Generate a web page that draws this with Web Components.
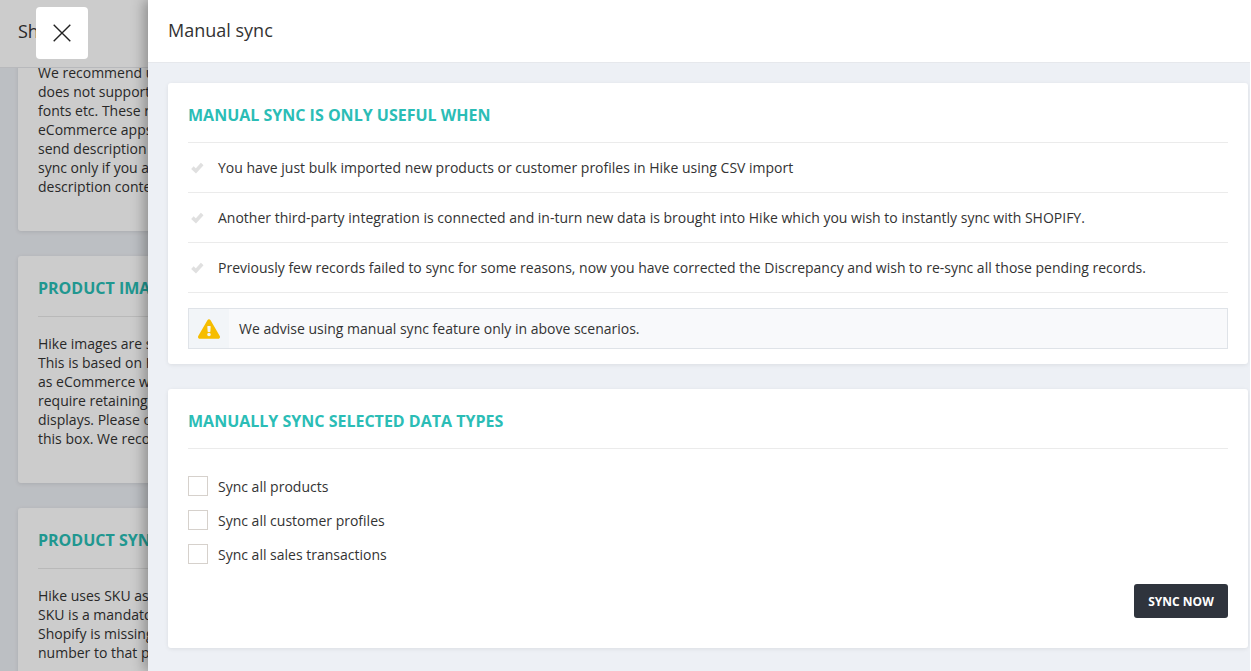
<!DOCTYPE html>
<html lang="en">
<head>
<meta charset="utf-8">
<title>Manual sync</title>
<style>
  html, body { margin: 0; height: 100%; overflow: hidden; }
  body { font-family: "Open Sans", "Liberation Sans", sans-serif; color: #333; }
</style>
</head>
<body>
<shop-page>
  <info-card slot="cards">
    <span>We recommend u</span><span>does not support</span><span>fonts etc. These r</span><span>eCommerce apps</span><span>send description</span><span>sync only if you a</span><span>description conte</span>
  </info-card>
  <info-card slot="cards" heading="Product images">
    <span>Hike images are s</span><span>This is based on H</span><span>as eCommerce w</span><span>require retaining</span><span>displays. Please c</span><span>this box. We reco</span>
  </info-card>
  <info-card slot="cards" heading="Product sync">
    <span>Hike uses SKU as</span><span>SKU is a mandato</span><span>Shopify is missing</span><span>number to that p</span>
  </info-card>
</shop-page>

<sync-drawer heading="Manual sync">
  <sync-card heading="Manual sync is only useful when">
    <check-row>You have just bulk imported new products or customer profiles in Hike using CSV import</check-row>
    <check-row>Another third-party integration is connected and in-turn new data is brought into Hike which you wish to instantly sync with SHOPIFY.</check-row>
    <check-row>Previously few records failed to sync for some reasons, now you have corrected the Discrepancy and wish to re-sync all those pending records.</check-row>
    <warn-note>We advise using manual sync feature only in above scenarios.</warn-note>
  </sync-card>
  <sync-card heading="Manually sync selected data types" spaced>
    <div style="height: 27px"></div>
    <sync-option>Sync all products</sync-option>
    <sync-option>Sync all customer profiles</sync-option>
    <sync-option>Sync all sales transactions</sync-option>
    <sync-button>Sync now</sync-button>
  </sync-card>
</sync-drawer>

<script>
// Pagina de fondo, oscurecida por el overlay
class ShopPage extends HTMLElement {
  constructor() {
    super();
    this.attachShadow({ mode: 'open' });
    this.shadowRoot.innerHTML = `
      <style>
        :host { display: flex; flex-direction: column; height: 671px; position: relative; overflow: hidden; background: #eceff4; }
        header { flex: none; height: 68px; box-sizing: border-box; padding-left: 18px; background: #fff; border-bottom: 1px solid #e6e8ec; font-size: 18px; line-height: 62px; color: #333; position: relative; z-index: 1; }
        .scroll { flex: 1; min-height: 0; overflow: hidden; padding-left: 18px; }
        .list { display: flex; flex-direction: column; gap: 25px; margin-top: -42px; }
        .overlay { position: absolute; inset: 0; z-index: 2; background: rgba(0, 0, 0, .2); }
      </style>
      <header>Shopify</header>
      <div class="scroll"><div class="list"><slot name="cards"></slot></div></div>
      <div class="overlay"></div>
    `;
  }
}

class InfoCard extends HTMLElement {
  constructor() {
    super();
    this.attachShadow({ mode: 'open' });
  }

  connectedCallback() {
    const heading = this.getAttribute('heading');
    this.shadowRoot.innerHTML = `
      <style>
        :host { display: block; width: 400px; box-sizing: border-box; padding: 20px 20px 35px; background: #fff; border-radius: 3px; box-shadow: 0 1px 4px rgba(0, 0, 0, .1); }
        h2 { margin: 0; padding-bottom: 14px; height: 26px; box-sizing: content-box; border-bottom: 1px solid #e8e8e8; font-size: 16px; line-height: 24px; font-weight: 700; color: #28bdb4; text-transform: uppercase; white-space: nowrap; }
        .body { padding-top: 17px; width: 110px; font-size: 14px; line-height: 19px; color: #333; }
        ::slotted(span) { display: block; white-space: nowrap; }
      </style>
      ${heading ? `<h2>${heading}</h2>` : ''}
      <div class="body"><slot></slot></div>
    `;
  }
}

class SyncDrawer extends HTMLElement {
  constructor() {
    super();
    this.attachShadow({ mode: 'open' });
  }

  connectedCallback() {
    this.shadowRoot.innerHTML = `
      <style>
        :host { display: flex; flex-direction: column; position: absolute; top: 0; left: 148px; right: 0; bottom: 0; z-index: 3; box-sizing: border-box; border-right: 1px solid #fff; background: #edf0f5; box-shadow: -4px 0 12px rgba(0, 0, 0, .3); }
        header { flex: none; height: 63px; box-sizing: border-box; padding-left: 20px; background: #fff; border-bottom: 1px solid #e6e8ec; font-size: 18px; line-height: 61px; color: #333; }
        .content { flex: 1; min-height: 0; overflow: hidden; padding: 20px 2px 0 20px; }
        .close { position: absolute; left: -112px; top: 7px; width: 52px; height: 52px; display: flex; align-items: center; justify-content: center; background: #fff; border-radius: 4px; }
      </style>
      <div class="close">
        <svg width="18" height="18" viewBox="0 0 18 18" fill="none" stroke="#222" stroke-width="1.4"><path d="M.7.7l16.6 16.6M17.3.7L.7 17.3"/></svg>
      </div>
      <header>${this.getAttribute('heading')}</header>
      <div class="content"><slot></slot></div>
    `;
  }
}

class SyncCard extends HTMLElement {
  constructor() {
    super();
    this.attachShadow({ mode: 'open' });
  }

  connectedCallback() {
    this.shadowRoot.innerHTML = `
      <style>
        :host { display: block; box-sizing: border-box; padding: 20px 20px 15px; background: #fff; border-radius: 3px; box-shadow: 0 1px 4px rgba(0, 0, 0, .08); }
        :host([spaced]) { margin-top: 25px; padding-bottom: 30px; }
        h2 { margin: 0; height: 39px; border-bottom: 1px solid #ebebeb; font-size: 16px; line-height: 24px; font-weight: 700; color: #2bbdb6; text-transform: uppercase; }
      </style>
      <h2>${this.getAttribute('heading')}</h2>
      <slot></slot>
    `;
  }
}

class CheckRow extends HTMLElement {
  constructor() {
    super();
    this.attachShadow({ mode: 'open' });
    this.shadowRoot.innerHTML = `
      <style>
        :host { display: flex; align-items: center; height: 50px; box-sizing: border-box; border-bottom: 1px solid #ebebeb; font-size: 14px; color: #333; }
        svg { flex: none; width: 14px; height: 14px; margin: 0 14px 0 2px; fill: none; stroke: #e0e0e0; stroke-width: 3.6; }
      </style>
      <svg viewBox="0 0 14 14"><path d="M2.4 6.6L5.9 10 12.2 3"/></svg>
      <slot></slot>
    `;
  }
}

class WarnNote extends HTMLElement {
  constructor() {
    super();
    this.attachShadow({ mode: 'open' });
    this.shadowRoot.innerHTML = `
      <style>
        :host { display: flex; align-items: stretch; height: 41px; margin-top: 15px; box-sizing: border-box; border: 1px solid #dfe3e8; background: #f8f9fb; font-size: 14px; color: #333; }
        .icon { flex: none; width: 40px; display: flex; align-items: center; justify-content: center; background: #f2f5f8; }
        svg { width: 22px; height: 20px; fill: #f6bd00; }
        .text { display: flex; align-items: center; padding-left: 10px; }
      </style>
      <div class="icon"><svg viewBox="0 0 576 512"><path d="M569.517 440.013C587.975 472.007 564.806 512 527.94 512H48.054c-36.937 0-59.999-40.055-41.577-71.987L246.423 23.985c18.467-32.009 64.72-31.951 83.154 0l239.94 416.028zM288 354c-25.405 0-46 20.595-46 46s20.595 46 46 46 46-20.595 46-46-20.595-46-46-46zm-43.673-165.346l7.418 136c.347 6.364 5.609 11.346 11.982 11.346h48.546c6.373 0 11.635-4.982 11.982-11.346l7.418-136c.375-6.874-5.098-12.654-11.982-12.654h-63.383c-6.884 0-12.356 5.78-11.981 12.654z"/></svg></div>
      <div class="text"><slot></slot></div>
    `;
  }
}

class SyncOption extends HTMLElement {
  constructor() {
    super();
    this.attachShadow({ mode: 'open' });
    this.shadowRoot.innerHTML = `
      <style>
        :host { display: flex; align-items: center; height: 20px; margin-bottom: 14px; font-size: 14px; color: #333; }
        .box { flex: none; width: 20px; height: 20px; box-sizing: border-box; margin-right: 10px; border: 1px solid #d6d1cc; background: #fff; }
      </style>
      <span class="box"></span>
      <slot></slot>
    `;
  }
}

class SyncButton extends HTMLElement {
  constructor() {
    super();
    this.attachShadow({ mode: 'open' });
    this.shadowRoot.innerHTML = `
      <style>
        :host { display: flex; justify-content: flex-end; margin-top: 20px; }
        button { width: 94px; height: 34px; padding: 0; border: 0; border-radius: 3px; background: #2f343d; color: #fff; font: 700 12px "Open Sans", "Liberation Sans", sans-serif; text-transform: uppercase; }
      </style>
      <button><slot></slot></button>
    `;
  }
}

customElements.define('shop-page', ShopPage);
customElements.define('info-card', InfoCard);
customElements.define('sync-drawer', SyncDrawer);
customElements.define('sync-card', SyncCard);
customElements.define('check-row', CheckRow);
customElements.define('warn-note', WarnNote);
customElements.define('sync-option', SyncOption);
customElements.define('sync-button', SyncButton);
</script>
</body>
</html>
